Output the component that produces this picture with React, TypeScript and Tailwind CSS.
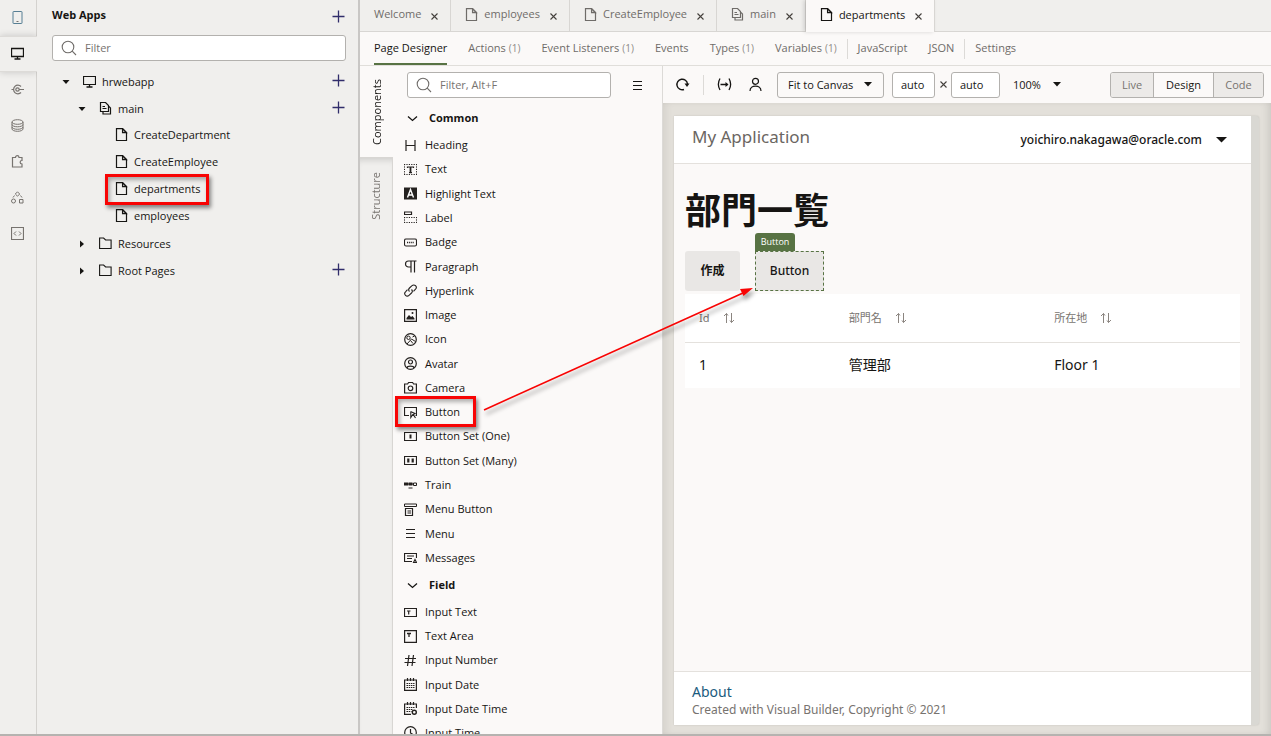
import React, { ReactNode } from "react";

const UI = "font-['Open_Sans','Noto_Sans_CJK_JP',sans-serif]";
const APP = "font-['Noto_Sans','Noto_Sans_CJK_JP',sans-serif]";

/* ---------- icons ---------- */

function Icon({ children, size = 13, className = "" }: { children: ReactNode; size?: number; className?: string }) {
  return (
    <svg
      width={size}
      height={size}
      viewBox={`0 0 ${size} ${size}`}
      fill="none"
      stroke="currentColor"
      strokeWidth="1"
      className={`shrink-0 ${className}`}
      aria-hidden="true"
    >
      {children}
    </svg>
  );
}

const FileIcon = () => (
  <Icon>
    <path d="M1.500.600h6l4 4v7.900h-10z" strokeWidth="1.200" />
    <path d="M7.500.600v4h4z" strokeWidth="1.100" fill="currentColor" fillOpacity=".25" />
  </Icon>
);

const FlowIcon = () => (
  <Icon>
    <path d="M1.500.500h5l3 3v6h-8z" strokeWidth="1.200" />
    <path d="M3.500 4.500h2.500M3.500 6.500h4M10 4.500l1.500 1.500v6h-7.500v-2" strokeWidth="1.200" />
  </Icon>
);

const FolderIcon = () => (
  <Icon>
    <path d="M.6 11.500v-10.500h4l2 2h5.500v8.500z" strokeWidth="1.100" />
  </Icon>
);

const MonitorIcon = () => (
  <Icon>
    <path d="M.5 1.500h12v8H.5z" strokeWidth="1.200" />
    <path d="M6.500 9.500v2.500M3.500 12h6" strokeWidth="1.300" />
  </Icon>
);

const Plus = () => (
  <Icon className="text-[#312d6b]">
    <path d="M6.500 .5v12M.5 6.500h12" strokeWidth="1.300" />
  </Icon>
);

const Caret = ({ open = true }: { open?: boolean }) => (
  <Icon size={12} className="text-[#161513]">
    {open ? (
      <path d="M2.500 4h7L6 8z" fill="currentColor" stroke="none" />
    ) : (
      <path d="M4 2.500v7L8 6z" fill="currentColor" stroke="none" />
    )}
  </Icon>
);

const DownCaret = ({ className }: { className: string }) => (
  <svg width="8" height="5" viewBox="0 0 8 5" className={className} aria-hidden="true">
    <path d="M0 0h8L4 4.500z" fill="#161513" />
  </svg>
);

const Close = () => (
  <Icon size={7} className="text-[#45413d]">
    <path d="M.5.5l6 6M6.500.5l-6 6" strokeWidth="1.100" />
  </Icon>
);

const SearchIcon = () => (
  <Icon size={16} className="text-[#6f6c69]">
    <circle cx="7" cy="7" r="5.800" strokeWidth="1.100" />
    <path d="M11.200 11.200l3.800 3.800" strokeWidth="1.100" />
  </Icon>
);

const SortIcon = () => (
  <Icon size={12} className="text-[#8b8580]">
    <path d="M3.500 11V1.500M1 4l2.500-2.500L5 3.500M8.500 1v9.500M11 8l-2.500 2.500L7 8.500" />
  </Icon>
);

/* ---------- activity rail ---------- */

const railIcons: { name: string; art: ReactNode }[] = [
  { name: "Mobile", art: <><rect x="2" y=".5" width="9" height="12" rx=".5" stroke="#577f94" /><path d="M5.500 10.500h2" /></> },
  { name: "Web", art: <><path d="M.5 1.500h12v8H.5z" strokeWidth="1.300" /><path d="M6.500 9.500v2.500M3.500 12h6" strokeWidth="1.300" /></> },
  { name: "Services", art: <><path d="M10 3.500a4.300 4.300 0 1 0 0 6M.5 6.500h2M8 6.500h5" strokeWidth="1.200" /><circle cx="6.500" cy="6.500" r="1.700" strokeWidth="1.200" /></> },
  { name: "Business Objects", art: <><ellipse cx="6.500" cy="3" rx="5.500" ry="2.300" /><path d="M1 3v7c0 1.300 2.500 2.300 5.500 2.300S12 11.300 12 10V3M1 5.500c0 1.300 2.500 2.300 5.500 2.300S12 6.800 12 5.500M1 8c0 1.300 2.500 2.300 5.500 2.300S12 9.300 12 8" /></> },
  { name: "Components", art: <path d="M1.500 2.500h3c0-2.500 3.500-2.500 3.500 0h3v3c-2.500 0-2.500 3.500 0 3.500v3h-9.500z" strokeWidth="1.200" /> },
  { name: "Processes", art: <><path d="M6.500.8l2.200 2.200-2.200 2.200L4.300 3z" /><circle cx="2.500" cy="10" r="2" /><path d="M8.500 8.500h3.500v3.500H8.500zM3.500 4.500L2 6.500M9.500 4.500l1.500 2" /></> },
  { name: "Source", art: <><path d="M.5.5h12v12H.5z" strokeWidth="1.200" /><path d="M5 4.500l-2 2 2 2M8 4.500l2 2-2 2" /></> },
];

function Rail() {
  return (
    <nav className="flex w-[37px] shrink-0 flex-col border-r border-[#d4d2cf] bg-[#f0efed] text-[#77736f]">
      {railIcons.map((r, i) => (
        <button
          key={r.name}
          aria-label={r.name}
          className={`flex h-9 items-center justify-center pb-[2px] ${
            i === 1 ? "-mr-px border-y border-[#dddbd8] bg-[#f0efed] pr-[2px] text-[#161513] shadow-[0_0_7px_rgba(0,0,0,0.18)]" : "pr-px"
          }`}
        >
          <Icon>{r.art}</Icon>
        </button>
      ))}
    </nav>
  );
}

/* ---------- web apps tree ---------- */

type Node = { label: string; depth: number; icon: ReactNode; caret?: "open" | "closed"; add?: boolean; marked?: boolean };

const tree: Node[] = [
  { label: "hrwebapp", depth: 0, icon: <MonitorIcon />, caret: "open", add: true },
  { label: "main", depth: 1, icon: <FlowIcon />, caret: "open", add: true },
  { label: "CreateDepartment", depth: 2, icon: <FileIcon /> },
  { label: "CreateEmployee", depth: 2, icon: <FileIcon /> },
  { label: "departments", depth: 2, icon: <FileIcon />, marked: true },
  { label: "employees", depth: 2, icon: <FileIcon /> },
  { label: "Resources", depth: 1, icon: <FolderIcon />, caret: "closed" },
  { label: "Root Pages", depth: 1, icon: <FolderIcon />, caret: "closed", add: true },
];

const indents = ["pl-[23px]", "pl-[39px]", "pb-[2px] pl-[55px]"];

const Mark = ({ className }: { className: string }) => (
  <span
    className={`pointer-events-none absolute z-10 border-[3px] border-[#f80404] shadow-[2px_3px_4px_rgba(0,0,0,0.45),inset_2px_3px_4px_rgba(0,0,0,0.3)] ${className}`}
  />
);

function FilterBox({ id, placeholder, className }: { id: string; placeholder: string; className: string }) {
  return (
    <label
      htmlFor={id}
      className={`flex h-[26px] items-center gap-2 rounded-[3px] border border-[#b3b1ae] bg-white px-2 ${className}`}
    >
      <SearchIcon />
      <input
        id={id}
        aria-label={placeholder}
        placeholder={placeholder}
        className="w-full min-w-0 bg-transparent text-[11px] outline-none placeholder:text-[#77736f]"
      />
    </label>
  );
}

function Sidebar() {
  return (
    <aside className="flex w-[323px] shrink-0 flex-col border-r-2 border-[#c9c7c5] bg-[#f0efed]">
      <header className="flex h-8 items-center justify-between pr-[13px] pl-[15px]">
        <h2 className="pb-[2px] text-[11px] font-bold">Web Apps</h2>
        <button aria-label="Add web app"><Plus /></button>
      </header>
      <FilterBox id="apps-filter" placeholder="Filter" className="mt-[3px] mr-3 ml-[15px]" />
      <ul className="mt-[7px]">
        {tree.map((n) => (
          <li key={n.label} className={`relative flex h-[27px] items-center pr-[13px] ${indents[n.depth]}`}>
            <span className="mr-[11px] flex w-3">{n.caret && <Caret open={n.caret === "open"} />}</span>
            {n.icon}
            <span className="ml-[6px] flex-1">{n.label}</span>
            {n.add && <button aria-label={`Add to ${n.label}`} className="pb-[2px]"><Plus /></button>}
            {n.marked && <Mark className="-top-[2px] left-[68px] h-[31px] w-[104px]" />}
          </li>
        ))}
      </ul>
    </aside>
  );
}

/* ---------- editor tabs ---------- */

const tabs = [
  { label: "Welcome", icon: null },
  { label: "employees", icon: <FileIcon /> },
  { label: "CreateEmployee", icon: <FileIcon /> },
  { label: "main", icon: <FlowIcon /> },
  { label: "departments", icon: <FileIcon /> },
];

function EditorTabs() {
  return (
    <div className="flex h-8 shrink-0 border-b border-[#d8d6d3] bg-[#f0efed]">
      {tabs.map((t, i) => (
        <div
          key={t.label}
          className={`flex items-center border-r border-[#d8d6d3] pr-3 pl-[14px] pb-[3px] ${
            i === 4 ? "-mb-px bg-[#fbf9f8] text-[#161513] shadow-[-2px_0_4px_rgba(0,0,0,0.15)]" : "text-[#6f6c69]"
          }`}
        >
          {t.icon && <span className="mr-[6px] flex">{t.icon}</span>}
          <a href={`#${t.label}`}>{t.label}</a>
          <button aria-label={`Close ${t.label}`} className="ml-[10px] pt-1"><Close /></button>
        </div>
      ))}
    </div>
  );
}

const sections: { label: string; count?: number; divided?: boolean }[] = [
  { label: "Page Designer" },
  { label: "Actions", count: 1 },
  { label: "Event Listeners", count: 1 },
  { label: "Events" },
  { label: "Types", count: 1 },
  { label: "Variables", count: 1 },
  { label: "JavaScript", divided: true },
  { label: "JSON" },
  { label: "Settings", divided: true },
];

function SectionTabs() {
  return (
    <div className="flex h-[34px] shrink-0 items-center border-b border-[#e0deda] pl-[14px] text-[#6f6c69]">
      {sections.map((s, i) => (
        <div key={s.label} className={`flex h-full items-center ${i === 0 ? "" : s.divided ? "ml-[10px]" : "ml-[21px]"}`}>
          {s.divided && <span className="mr-[10px] h-5 w-px bg-[#dcdad7]" />}
          <a
            href={`#${s.label}`}
            className={`flex h-full items-center gap-[3px] border-b-2 ${
              i === 0 ? "border-[#587344] font-medium text-[#161513]" : "border-transparent"
            }`}
          >
            {s.label}
            {s.count && <span className="text-[10px] text-[#8f8b87]">({s.count})</span>}
          </a>
        </div>
      ))}
    </div>
  );
}

/* ---------- component palette ---------- */

const common: { label: string; art: ReactNode }[] = [
  { label: "Heading", art: <path d="M2 1v11M11 1v11M2 6.500h9" strokeWidth="1.200" /> },
  { label: "Text", art: <><path d="M0 1.500h13M0 11.500h13M.5 1v11M12.500 1v11" strokeDasharray="1.200 1.200" /><path d="M3.500 5V4h6v1M5 9.700h3" strokeWidth="1.200" /><path d="M6.500 4v6" strokeWidth="1.800" /></> },
  { label: "Highlight Text", art: <><path d="M0 .5h13v12H0z" fill="currentColor" stroke="none" /><path d="M3.500 10.500l3-8 3 8M4.500 8h4" stroke="#fff" strokeWidth="1.400" /></> },
  { label: "Label", art: <><path d="M.5 1h7v2.500h-7z" strokeWidth="1.200" /><path d="M0 6.500h13M0 11.500h13M.5 6v6M12.500 6v6" strokeDasharray="1.200 1.200" /></> },
  { label: "Badge", art: <><rect x=".5" y="3" width="12" height="7" rx="1.500" strokeWidth="1.100" /><path d="M3 6.500h7" strokeWidth="1.500" strokeDasharray="1.200 .9" /></> },
  { label: "Paragraph", art: <path d="M12.500 1H4.500a3 3 0 0 0 0 6H7M7 1v11.500M10.500 1v11.500" strokeWidth="1.200" /> },
  { label: "Hyperlink", art: <path d="M5.500 7.500a2.500 2.500 0 0 1 0-3.500L8 1.700a2.400 2.400 0 0 1 3.500 3.500L9.500 7.300M7.500 5.500a2.500 2.500 0 0 1 0 3.500L5 11.300a2.400 2.400 0 0 1-3.500-3.500L3.500 5.700" strokeWidth="1.100" /> },
  { label: "Image", art: <><path d="M.6.6h11.800v11.800H.6z" strokeWidth="1.200" /><path d="M2.500 10.500V9l2.500-3 2 2 1.500-1 2 2.500v1z" fill="currentColor" stroke="none" /><circle cx="8.500" cy="4" r="1" fill="currentColor" stroke="none" /></> },
  { label: "Icon", art: <><circle cx="6.500" cy="6.500" r="5.800" strokeWidth="1.200" /><circle cx="4.500" cy="4.800" r="1.700" /><path d="M3 11l4.500-5 4 2.500M8.500 4l2-1M6.500 7.500l2.500 3" /></> },
  { label: "Avatar", art: <><circle cx="6.500" cy="6.500" r="5.800" strokeWidth="1.200" /><circle cx="6.500" cy="5" r="2" strokeWidth="1.200" /><path d="M3 11c.3-2.500 6.700-2.500 7 0" strokeWidth="1.200" /></> },
  { label: "Camera", art: <><path d="M.6 3h3l1-1.500h4l1 1.500h2.800v9H.6z" strokeWidth="1.200" /><circle cx="6.500" cy="7.300" r="2.300" strokeWidth="1.200" /></> },
  { label: "Button", art: <><path d="M5 9.500H.5v-8h12v8H11.500" strokeWidth="1.200" /><path d="M6.500 5.500l4.500 2-1.800.9L11.500 12M6.800 6v5.500l2-3" strokeWidth="1.100" /></> },
  { label: "Button Set (One)", art: <><path d="M.5 2.500h12v8H.5z" strokeWidth="1.200" /><path d="M6.500 4.500v4" strokeWidth="2" /></> },
  { label: "Button Set (Many)", art: <><path d="M.5 2.500h12v8H.5z" strokeWidth="1.200" /><path d="M4.300 4.500v4M8.700 4.500v4" strokeWidth="2.200" /></> },
  { label: "Train", art: <><path d="M0 3.500h4v3H0zM4.500 3.500h4v3h-4z" fill="currentColor" stroke="none" /><path d="M3 5h6M9.500 4h3v2.500h-3zM4.500 9h4" /></> },
  { label: "Menu Button", art: <><path d="M.5 1h12v2.500H.5z" /><path d="M1.500 5.500h7v7h-7zM3.500 8h3.500M3.500 10h3.500" strokeWidth="1.200" /></> },
  { label: "Menu", art: <path d="M2 2.500h9M2 6.500h9M2 10.500h9" strokeWidth="1.100" /> },
  { label: "Messages", art: <><path d="M8 10.500H.5v-8h12V7" strokeWidth="1.200" /><path d="M3 5h7M3 7.500h5M9.500 11.500l1.500-3 1.500 3z" strokeWidth="1.100" /></> },
];

const calendar = <path d="M.6 2h11.800v10.400H.6zM3.500 0v3M6.500 0v3M9.500 0v3" strokeWidth="1.200" />;
const dates = <path d="M2.500 5.500h8M2.500 7.500h8M2.500 9.500h8" strokeDasharray="1.500 .7" />;

const field: { label: string; art: ReactNode }[] = [
  { label: "Input Text", art: <><path d="M.5 2.500h12v8H.5z" strokeWidth="1.200" /><path d="M3 5h3.500M4.700 5v3.500" strokeWidth="1.200" /></> },
  { label: "Text Area", art: <><path d="M.6.6h11.800v11.800H.6z" strokeWidth="1.200" /><path d="M3 3.500h4M5 3.500V7" strokeWidth="1.300" /></> },
  { label: "Input Number", art: <path d="M5 1L3.500 12M9.500 1L8 12M1 4.500h11M.5 8.500h11" strokeWidth="1.200" /> },
  { label: "Input Date", art: <>{calendar}{dates}</> },
  { label: "Input Date Time", art: <><path d="M7 12.400H.6V2h11.800v4M3.500 0v3M6.500 0v3M9.500 0v3" strokeWidth="1.200" /><path d="M2.500 5.500h8M2.500 7.500h6M2.500 9.500h5" strokeDasharray="1.500 .7" /><circle cx="10.300" cy="10.300" r="2" strokeWidth="1.400" /></> },
  { label: "Input Time", art: <><circle cx="6.500" cy="6.500" r="5.800" strokeWidth="1.200" /><path d="M6.500 3v4l2.500 1.500" strokeWidth="1.200" /></> },
];

function Group({ title, items, className }: { title: string; items: typeof common; className: string }) {
  return (
    <section>
      <h3 className="flex h-[30px] items-center gap-[10px] pl-[13px] text-[11px] font-bold">
        <Icon>
          <path d="M2 4.500l4.500 4 4.500-4" strokeWidth="1.300" />
        </Icon>
        {title}
      </h3>
      <ul className={`grid auto-rows-fr ${className}`}>
        {items.map((c) => (
          <li key={c.label} className="relative flex items-center gap-2 pl-[11px]">
            <Icon className="text-[#24211f]">{c.art}</Icon>
            {c.label}
            {c.label === "Button" && <Mark className="-top-[4px] left-[2px] h-[31px] w-[81px]" />}
          </li>
        ))}
      </ul>
    </section>
  );
}

function Palette() {
  return (
    <div className="flex w-[303px] shrink-0 border-r border-[#dcdad7]">
      <div className="flex w-[33px] shrink-0 flex-col">
        <a href="#components" className="flex h-[91px] items-center justify-center">
          <span className="rotate-180 [writing-mode:vertical-rl]">Components</span>
        </a>
        <a
          href="#structure"
          className="flex flex-1 justify-center border-t border-r border-[#d8d6d3] bg-[#f0efed] pt-[14px] text-[#77736f] shadow-[inset_0_6px_6px_-4px_rgba(0,0,0,0.15)]"
        >
          <span className="h-fit rotate-180 [writing-mode:vertical-rl]">Structure</span>
        </a>
      </div>
      <div className="min-w-0 flex-1 overflow-hidden">
        <div className="flex items-center pt-[6px] pr-[18px] pl-[14px]">
          <FilterBox id="component-filter" placeholder="Filter, Alt+F" className="flex-1" />
          <button aria-label="View options" className="ml-5">
            <Icon>
              <path d="M2 2.500h9M2 6.500h9M2 10.500h9" strokeWidth="1.200" />
            </Icon>
          </button>
        </div>
        <div className="pt-[5px]">
          <Group title="Common" items={common} className="h-[437px]" />
          <Group title="Field" items={field} className="h-[145px]" />
        </div>
      </div>
    </div>
  );
}

/* ---------- canvas ---------- */

function Toolbar() {
  const auto = "h-[26px] rounded-[3px] border border-[#b3b1ae] bg-white px-2 text-[11px] outline-none";
  return (
    <div className="flex h-[37px] shrink-0 items-center pr-[7px] pl-3">
      <button aria-label="Reload">
        <Icon size={15}>
          <path d="M9 12.500a5.300 5.300 0 1 1 3.500-5.500" strokeWidth="1.400" />
          <path d="M9.500 6.500h5l-2.500 3.500z" fill="currentColor" stroke="none" />
        </Icon>
      </button>
      <span className="mr-[13px] ml-[13px] h-5 w-px bg-[#dcdad7]" />
      <button aria-label="Fit width">
        <Icon size={15}>
          <path d="M3 1.500c-2 3.500-2 8 0 11.500M12 1.500c2 3.500 2 8 0 11.500M3.500 7.500h7" strokeWidth="1.300" />
          <path d="M8.500 5v5l3-2.500z" fill="currentColor" stroke="none" />
        </Icon>
      </button>
      <button aria-label="User role" className="ml-4">
        <Icon size={15}>
          <circle cx="7.500" cy="4.300" r="3" strokeWidth="1.200" />
          <path d="M2 14c0-6.500 11-6.500 11 0" strokeWidth="1.200" />
        </Icon>
      </button>
      <div className="relative ml-[14px]">
        <select
          aria-label="Canvas size"
          className="h-[26px] w-[107px] appearance-none rounded-[3px] border border-[#b3b1ae] bg-[#fbf9f8] pl-[10px] text-[11px] font-medium"
        >
          <option>Fit to Canvas</option>
        </select>
        <DownCaret className="pointer-events-none absolute top-[10px] right-3" />
      </div>
      <input aria-label="Canvas width" defaultValue="auto" className={`ml-2 w-[43px] ${auto}`} />
      <span className="mx-1 flex w-2 justify-center"><Close /></span>
      <input aria-label="Canvas height" defaultValue="auto" className={`w-[49px] ${auto}`} />
      <div className="relative ml-[13px]">
        <select aria-label="Zoom" className="h-[26px] w-12 appearance-none bg-transparent text-[11px] font-medium">
          <option>100%</option>
        </select>
        <DownCaret className="pointer-events-none absolute top-[10px] right-0" />
      </div>
      <div className="ml-auto flex h-[26px] divide-x divide-[#b3b1ae] overflow-hidden rounded-[3px] border border-[#b3b1ae] text-[#77736f]">
        <button className="w-[43px] bg-[#eceae8]">Live</button>
        <button className="w-[60px] font-medium text-[#161513]">Design</button>
        <button className="w-[49px] bg-[#eceae8]">Code</button>
      </div>
    </div>
  );
}

function HeaderCell({ label, className = "" }: { label: string; className?: string }) {
  return (
    <th className={`h-12 pl-[14px] text-left text-[11px] font-normal text-[#77736f] ${className}`}>
      <span className="flex items-center gap-[13px]">
        {label}
        <button aria-label={`Sort ${label}`}><SortIcon /></button>
      </span>
    </th>
  );
}

function Preview() {
  return (
    <div className={`flex min-h-0 flex-1 flex-col bg-[#fbf9f8] text-[#161513] ${APP}`}>
      <header className="flex h-12 shrink-0 items-center justify-between border-b border-[#e4e1dd] bg-white pr-6 pl-[18px]">
        <h1 className="pb-[6px] text-[17px] text-[#6b6662]">My Application</h1>
        <button className="flex items-center gap-[14px] text-[12px] font-medium">
          yoichiro.nakagawa@oracle.com
          <svg width="11" height="6" viewBox="0 0 11 6" aria-hidden="true">
            <path d="M0 0h11L5.500 5.500z" fill="#161513" />
          </svg>
        </button>
      </header>
      <main className="flex-1 px-[11px] pt-[23px]">
        <h2 className="text-[36px] leading-[48px] font-bold">部門一覧</h2>
        <div className="mt-4 flex gap-[15px]">
          <button className="h-10 w-[55px] rounded-[3px] bg-[#e9e7e5] text-[12px] font-bold">作成</button>
          <div className="relative">
            <button className="h-10 w-[69px] border border-dashed border-[#587344] bg-[#e9e7e5] text-[12px] font-medium">
              Button
            </button>
            <span className={`absolute -top-[18px] left-0 flex h-[18px] w-10 items-center justify-center rounded-t-[3px] bg-[#587344] text-[9px] font-medium text-white ${UI}`}>
              Button
            </span>
          </div>
        </div>
        <table className="mt-[3px] w-full table-fixed border-collapse bg-white">
          <thead>
            <tr className="border-b border-[#e4e1dd]">
              <HeaderCell label="Id" className="w-[27%]" />
              <HeaderCell label="部門名" className="w-[37%]" />
              <HeaderCell label="所在地" />
            </tr>
          </thead>
          <tbody className="text-[14px]">
            <tr className="h-[46px]">
              <td className="pl-[14px]">1</td>
              <td className="pl-[14px]">管理部</td>
              <td className="pl-[14px]">Floor 1</td>
            </tr>
          </tbody>
        </table>
      </main>
      <footer className="flex h-[54px] shrink-0 flex-col justify-center border-t border-[#e4e1dd] bg-white pt-1 pl-[18px]">
        <a href="#about" className="text-[14px] leading-[18px] text-[#1a5b7e]">About</a>
        <p className="text-[12px] leading-[17px] text-[#77736f]">Created with Visual Builder, Copyright © 2021</p>
      </footer>
    </div>
  );
}

function Arrow() {
  return (
    <svg
      className="pointer-events-none absolute top-[280px] left-[480px] z-20 drop-shadow-[2px_4px_2px_rgba(0,0,0,0.4)]"
      width="280"
      height="136"
      viewBox="0 0 280 136"
      aria-hidden="true"
    >
      <path d="M4 130L263 13" stroke="#f80404" strokeWidth="1.600" />
      <path d="M273 8l-9.500 8-3.500-7z" fill="#f80404" />
    </svg>
  );
}

export default function App() {
  return (
    <div className={`relative flex h-screen overflow-hidden border-b-2 border-[#b5b3b0] bg-[#fbf9f8] text-[11px] leading-4 text-[#161513] ${UI}`}>
      <Rail />
      <Sidebar />
      <div className="flex min-w-0 flex-1 flex-col">
        <EditorTabs />
        <SectionTabs />
        <div className="flex min-h-0 flex-1">
          <Palette />
          <div className="flex min-w-0 flex-1 flex-col">
            <Toolbar />
            <div className="flex min-h-0 flex-1 bg-[#e3e0da] pt-[13px] pr-3 pb-[9px] pl-[11px] shadow-[inset_-6px_0_8px_-4px_rgba(0,0,0,0.12),inset_6px_0_8px_-4px_rgba(0,0,0,0.08)]">
              <div className="flex min-w-0 flex-1 rounded-r-[3px] bg-[#d9d8d3] pr-2 shadow-[0_0_2px_rgba(0,0,0,0.15)]">
                <Preview />
              </div>
            </div>
          </div>
        </div>
      </div>
      <Arrow />
    </div>
  );
}
